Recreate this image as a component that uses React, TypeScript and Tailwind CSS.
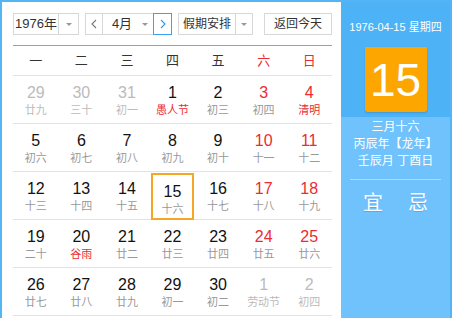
type Day = {
  n: number;
  l: string;
  out?: boolean;
  red?: boolean;
  fest?: boolean;
  sel?: boolean;
};

const weeks: Day[][] = [
  [
    { n: 29, l: '廿九', out: true },
    { n: 30, l: '三十', out: true },
    { n: 31, l: '初一', out: true },
    { n: 1, l: '愚人节', fest: true },
    { n: 2, l: '初三' },
    { n: 3, l: '初四', red: true },
    { n: 4, l: '清明', red: true, fest: true },
  ],
  [
    { n: 5, l: '初六' },
    { n: 6, l: '初七' },
    { n: 7, l: '初八' },
    { n: 8, l: '初九' },
    { n: 9, l: '初十' },
    { n: 10, l: '十一', red: true },
    { n: 11, l: '十二', red: true },
  ],
  [
    { n: 12, l: '十三' },
    { n: 13, l: '十四' },
    { n: 14, l: '十五' },
    { n: 15, l: '十六', sel: true },
    { n: 16, l: '十七' },
    { n: 17, l: '十八', red: true },
    { n: 18, l: '十九', red: true },
  ],
  [
    { n: 19, l: '二十' },
    { n: 20, l: '谷雨', fest: true },
    { n: 21, l: '廿二' },
    { n: 22, l: '廿三' },
    { n: 23, l: '廿四' },
    { n: 24, l: '廿五', red: true },
    { n: 25, l: '廿六', red: true },
  ],
  [
    { n: 26, l: '廿七' },
    { n: 27, l: '廿八' },
    { n: 28, l: '廿九' },
    { n: 29, l: '初一' },
    { n: 30, l: '初二' },
    { n: 1, l: '劳动节', out: true },
    { n: 2, l: '初四', out: true },
  ],
];

const weekdays = ['一', '二', '三', '四', '五', '六', '日'];

function Caret() {
  return <span className="w-0 h-0 border-l-[3px] border-r-[3px] border-t-[3px] border-l-transparent border-r-transparent border-t-[#999]" />;
}

function Cell({ d }: { d: Day }) {
  const num = d.out ? 'text-[#bbbbbb]' : d.red ? 'text-[#ee2a33]' : 'text-[#111]';
  const lunar = d.out ? 'text-[#bbbbbb]' : d.fest ? 'text-[#ee2a33]' : 'text-[#999]';
  return (
    <div className="h-[48px] border-b border-[#e3e3e3] px-[1px]">
      <div
        className={`h-full flex flex-col items-center pt-[8px] ${
          d.sel ? 'border-2 border-[#f5a623] pt-[6px] -mb-[1px] mt-[1px]' : ''
        }`}
      >
        <span className={`text-[16px] leading-[18px] ${num}`}>{d.n}</span>
        <span className={`text-[11px] leading-[16px] ${lunar}`}>{d.l}</span>
      </div>
    </div>
  );
}

export default function App() {
  return (
    <div
      className="w-[452px] h-[318px] overflow-hidden border-2 border-b-0 border-[#55b5f4] flex bg-white"
      style={{ fontFamily: '"Liberation Sans", "Noto Sans CJK SC", sans-serif' }}
    >
      <div className="w-[339px] shrink-0 pl-[11px] pr-[9px] pt-[11px]">
        <div className="flex items-center h-[22px] text-[#333]">
          <div className="w-[66px] h-full border border-[#d8d8d8] flex">
            <div className="flex-1 flex items-center justify-center text-[13px]">1976年</div>
            <div className="w-[20px] border-l border-[#d8d8d8] flex items-center justify-center">
              <Caret />
            </div>
          </div>
          <div className="ml-[6px] w-[87px] h-full flex">
            <div className="w-[18px] border border-[#d8d8d8] flex items-center justify-center text-[#777]">
              <svg width="6" height="10" viewBox="0 0 6 10">
                <path d="M5 1 L1 5 L5 9" fill="none" stroke="#777" strokeWidth="1.1" />
              </svg>
            </div>
            <div className="flex-1 border-y border-[#d8d8d8] flex items-center">
              <span className="flex-1 text-center text-[13px] pl-[4px]">4月</span>
              <span className="w-[16px] flex justify-center">
                <Caret />
              </span>
            </div>
            <div className="w-[19px] border border-[#3aa3ea] flex items-center justify-center">
              <svg width="6" height="10" viewBox="0 0 6 10">
                <path d="M1 1 L5 5 L1 9" fill="none" stroke="#2f97e2" strokeWidth="1.1" />
              </svg>
            </div>
          </div>
          <div className="ml-[6px] w-[75px] h-full border border-[#d8d8d8] flex">
            <div className="flex-1 flex items-center justify-center text-[12px]">假期安排</div>
            <div className="w-[17px] border-l border-[#d8d8d8] flex items-center justify-center">
              <Caret />
            </div>
          </div>
          <div className="ml-[11px] w-[68px] h-full border border-[#d8d8d8] flex items-center justify-center text-[12px]">
            返回今天
          </div>
        </div>

        <div className="mt-[10px] w-[319px] border-t border-[#55b5f4]">
          <div className="grid grid-cols-7 h-[30px] border-b border-[#e3e3e3]">
            {weekdays.map((w, i) => (
              <div
                key={w}
                className={`flex items-center justify-center text-[13px] ${i > 4 ? 'text-[#ee2a33]' : 'text-[#333]'}`}
              >
                {w}
              </div>
            ))}
          </div>
          {weeks.map((wk, i) => (
            <div key={i} className="grid grid-cols-7">
              {wk.map((d, j) => (
                <Cell key={j} d={d} />
              ))}
            </div>
          ))}
        </div>
      </div>

      <div className="flex-1 flex flex-col bg-[#6fc2fc] text-white">
        <div className="h-[115px] bg-[#4db2f6] flex flex-col items-center pt-[17px]">
          <div className="text-[11px] leading-[16px]">1976-04-15 星期四</div>
          <div className="mt-[12px] w-[62px] h-[65px] bg-[#fea600] rounded-b-[3px] shadow-[0_1px_2px_rgba(0,0,0,0.15)] flex items-center justify-center">
            <span className="text-[46px] leading-none">15</span>
          </div>
        </div>
        <div className="flex flex-col items-center pt-[2px] text-[12px] leading-[17px]">
          <div>三月十六</div>
          <div>丙辰年【龙年】</div>
          <div>壬辰月 丁酉日</div>
        </div>
        <div className="mt-[9px] mx-[9px] border-t border-[#a9dcfd]" />
        <div className="mt-[11px] flex justify-center gap-[25px] text-[20px] leading-[24px] [text-shadow:0_1px_0_rgba(60,110,220,0.35)]">
          <span>宜</span>
          <span>忌</span>
        </div>
      </div>
    </div>
  );
}
